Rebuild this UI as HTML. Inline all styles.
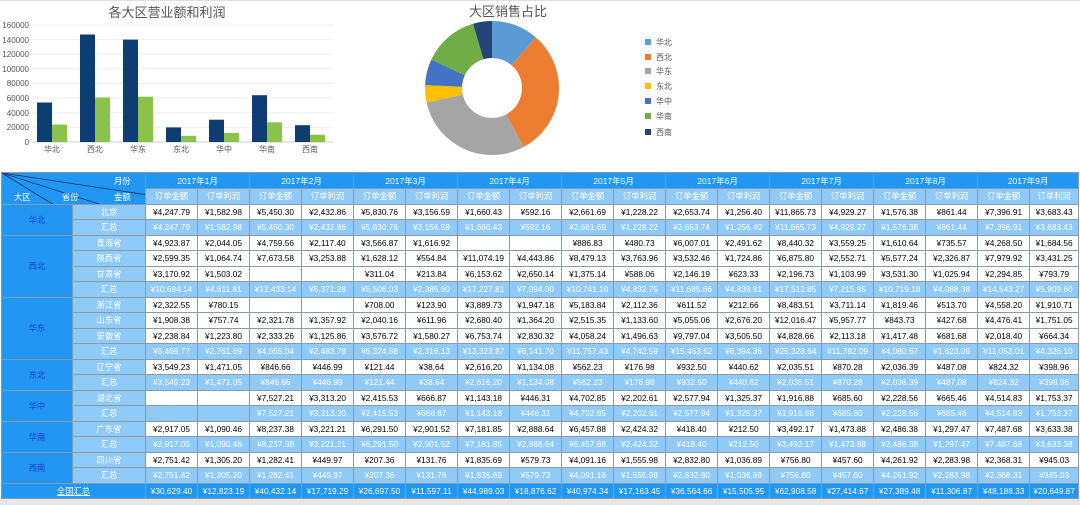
<!DOCTYPE html>
<html><head><meta charset="utf-8">
<style>
*{margin:0;padding:0;box-sizing:border-box}
body{width:1080px;height:505px;background:#fff;position:relative;overflow:hidden;font-family:"Liberation Sans","Noto Sans CJK SC",sans-serif}
svg text{font-family:"Liberation Sans","Noto Sans CJK SC",sans-serif}
#bg{position:absolute;left:0;top:497px;width:1080px;height:8px;background:#e6e6e6}
table{position:absolute;left:1px;top:172px;width:1077px;border-collapse:collapse;table-layout:fixed;font-size:8.3px}
td{border:1px solid #8a9aa8;height:15.5px;text-align:center;white-space:nowrap;overflow:hidden;padding:0;line-height:14px}
tr.h td{height:16px;background:#2196f3;color:#fff;font-size:8.5px}
tr.s td{background:#90caf9;color:#fff}
td.r{background:#2196f3;color:#1a3fd0}
td.p{background:#90caf9;color:#fff}
tr.t td{background:#90caf9;color:#fff}
tr.g td{background:#2196f3;color:#fff}
td.c{background:#2196f3;position:relative;padding:0}
</style></head><body>
<div style="position:absolute;left:0;top:0;width:1080px;height:1px;background:#e0e0e0"></div>
<svg width="360" height="165" style="position:absolute;left:0;top:0">
<text x="167" y="17" font-size="13" fill="#555" text-anchor="middle">各大区营业额和利润</text>
<g stroke="#eee" stroke-width="1">
<line x1="32" y1="25" x2="333" y2="25"/><line x1="32" y1="39.6" x2="333" y2="39.6"/><line x1="32" y1="54.3" x2="333" y2="54.3"/><line x1="32" y1="68.9" x2="333" y2="68.9"/><line x1="32" y1="83.5" x2="333" y2="83.5"/><line x1="32" y1="98.1" x2="333" y2="98.1"/><line x1="32" y1="112.8" x2="333" y2="112.8"/><line x1="32" y1="127.4" x2="333" y2="127.4"/>
</g>
<line x1="32" y1="142" x2="333" y2="142" stroke="#ccc"/>
<g font-size="8" fill="#555" text-anchor="end">
<text x="29" y="28">160000</text><text x="29" y="43">140000</text><text x="29" y="57">120000</text><text x="29" y="72">100000</text><text x="29" y="86">80000</text><text x="29" y="101">60000</text><text x="29" y="116">40000</text><text x="29" y="130">20000</text><text x="29" y="145">0</text>
</g>
<g fill="#0d3d73">
<rect x="37" y="102.5" width="15" height="39.5"/><rect x="80" y="34.5" width="15" height="107.5"/><rect x="123" y="39.6" width="15" height="102.4"/><rect x="166" y="127.4" width="15" height="14.6"/><rect x="209" y="119.7" width="15" height="22.3"/><rect x="252" y="95.2" width="15" height="46.8"/><rect x="295" y="125.2" width="15" height="16.8"/>
</g>
<g fill="#8bc34a">
<rect x="52" y="124.5" width="15" height="17.5"/><rect x="95" y="97.4" width="15" height="44.6"/><rect x="138" y="96.7" width="15" height="45.3"/><rect x="181" y="135.8" width="15" height="6.2"/><rect x="224" y="132.9" width="15" height="9.1"/><rect x="267" y="122.3" width="15" height="19.7"/><rect x="310" y="134.7" width="15" height="7.3"/>
</g>
<g font-size="8" fill="#555" text-anchor="middle">
<text x="52" y="152">华北</text><text x="95" y="152">西北</text><text x="138" y="152">华东</text><text x="181" y="152">东北</text><text x="224" y="152">华中</text><text x="267" y="152">华南</text><text x="310" y="152">西南</text>
</g>
</svg>
<svg width="680" height="165" style="position:absolute;left:400px;top:0">
<text x="108" y="16" font-size="13" fill="#555" text-anchor="middle">大区销售占比</text>
<g fill="none" stroke-width="37" transform="rotate(-90 92 88)">
<circle cx="92" cy="88" r="48.5" stroke="#5b9bd5" stroke-dasharray="34.4 400" stroke-dashoffset="0"/>
<circle cx="92" cy="88" r="48.5" stroke="#ed7d31" stroke-dasharray="93.8 400" stroke-dashoffset="-34.4"/>
<circle cx="92" cy="88" r="48.5" stroke="#a5a5a5" stroke-dasharray="89.3 400" stroke-dashoffset="-128.2"/>
<circle cx="92" cy="88" r="48.5" stroke="#ffc000" stroke-dasharray="12.8 400" stroke-dashoffset="-217.5"/>
<circle cx="92" cy="88" r="48.5" stroke="#4472c4" stroke-dasharray="19.2 400" stroke-dashoffset="-230.3"/>
<circle cx="92" cy="88" r="48.5" stroke="#70ad47" stroke-dasharray="40.8 400" stroke-dashoffset="-249.5"/>
<circle cx="92" cy="88" r="48.5" stroke="#264478" stroke-dasharray="14.6 400" stroke-dashoffset="-290.3"/>
</g>
<g font-size="8" fill="#555">
<rect x="245" y="39" width="6" height="6" fill="#5b9bd5"/><text x="256" y="45">华北</text>
<rect x="245" y="54" width="6" height="6" fill="#ed7d31"/><text x="256" y="60">西北</text>
<rect x="245" y="68" width="6" height="6" fill="#a5a5a5"/><text x="256" y="74">华东</text>
<rect x="245" y="83" width="6" height="6" fill="#ffc000"/><text x="256" y="89">东北</text>
<rect x="245" y="98" width="6" height="6" fill="#4472c4"/><text x="256" y="104">华中</text>
<rect x="245" y="113" width="6" height="6" fill="#70ad47"/><text x="256" y="119">华南</text>
<rect x="245" y="129" width="6" height="6" fill="#264478"/><text x="256" y="135">西南</text>
</g>
</svg>
<div id="bg"></div>
<table>
<colgroup><col style="width:71px"><col style="width:73px"><col span="17" style="width:52px"><col style="width:49px"></colgroup>
<tr class="h"><td class="c" colspan="2" rowspan="2"><svg width="146" height="32" style="position:absolute;left:0;top:0"><g stroke="#12335e" stroke-width="0.8"><line x1="0" y1="0" x2="52" y2="32"/><line x1="0" y1="0" x2="100" y2="32"/><line x1="0" y1="0" x2="146" y2="22"/></g><g font-size="8.3" fill="#fff"><text x="112" y="11">月份</text><text x="12" y="27">大区</text><text x="60" y="27">省份</text><text x="112" y="27">金额</text></g></svg></td><td colspan="2">2017年1月</td><td colspan="2">2017年2月</td><td colspan="2">2017年3月</td><td colspan="2">2017年4月</td><td colspan="2">2017年5月</td><td colspan="2">2017年6月</td><td colspan="2">2017年7月</td><td colspan="2">2017年8月</td><td colspan="2">2017年9月</td></tr>
<tr class="s"><td>订单金额</td><td>订单利润</td><td>订单金额</td><td>订单利润</td><td>订单金额</td><td>订单利润</td><td>订单金额</td><td>订单利润</td><td>订单金额</td><td>订单利润</td><td>订单金额</td><td>订单利润</td><td>订单金额</td><td>订单利润</td><td>订单金额</td><td>订单利润</td><td>订单金额</td><td>订单利润</td></tr>
<tr><td class="r" rowspan="2">华北</td><td class="p">北京</td><td>¥4,247.79</td><td>¥1,582.98</td><td>¥5,450.30</td><td>¥2,432.86</td><td>¥5,830.76</td><td>¥3,156.59</td><td>¥1,660.43</td><td>¥592.16</td><td>¥2,661.69</td><td>¥1,228.22</td><td>¥2,653.74</td><td>¥1,256.40</td><td>¥11,865.73</td><td>¥4,929.27</td><td>¥1,576.38</td><td>¥861.44</td><td>¥7,396.91</td><td>¥3,683.43</td></tr>
<tr class="t"><td>汇总</td><td>¥4,247.79</td><td>¥1,582.98</td><td>¥5,450.30</td><td>¥2,432.86</td><td>¥5,830.76</td><td>¥3,156.59</td><td>¥1,660.43</td><td>¥592.16</td><td>¥2,661.69</td><td>¥1,228.22</td><td>¥2,653.74</td><td>¥1,256.40</td><td>¥11,865.73</td><td>¥4,929.27</td><td>¥1,576.38</td><td>¥861.44</td><td>¥7,396.91</td><td>¥3,683.43</td></tr>
<tr><td class="r" rowspan="4">西北</td><td class="p">青海省</td><td>¥4,923.87</td><td>¥2,044.05</td><td>¥4,759.56</td><td>¥2,117.40</td><td>¥3,566.87</td><td>¥1,616.92</td><td></td><td></td><td>¥886.83</td><td>¥480.73</td><td>¥6,007.01</td><td>¥2,491.62</td><td>¥8,440.32</td><td>¥3,559.25</td><td>¥1,610.64</td><td>¥735.57</td><td>¥4,268.50</td><td>¥1,684.56</td></tr>
<tr><td class="p">陕西省</td><td>¥2,599.35</td><td>¥1,064.74</td><td>¥7,673.58</td><td>¥3,253.88</td><td>¥1,628.12</td><td>¥554.84</td><td>¥11,074.19</td><td>¥4,443.86</td><td>¥8,479.13</td><td>¥3,763.96</td><td>¥3,532.46</td><td>¥1,724.86</td><td>¥6,875.80</td><td>¥2,552.71</td><td>¥5,577.24</td><td>¥2,326.87</td><td>¥7,979.92</td><td>¥3,431.25</td></tr>
<tr><td class="p">甘肃省</td><td>¥3,170.92</td><td>¥1,503.02</td><td></td><td></td><td>¥311.04</td><td>¥213.84</td><td>¥6,153.62</td><td>¥2,650.14</td><td>¥1,375.14</td><td>¥588.06</td><td>¥2,146.19</td><td>¥623.33</td><td>¥2,196.73</td><td>¥1,103.99</td><td>¥3,531.30</td><td>¥1,025.94</td><td>¥2,294.85</td><td>¥793.79</td></tr>
<tr class="t"><td>汇总</td><td>¥10,694.14</td><td>¥4,611.81</td><td>¥12,433.14</td><td>¥5,371.28</td><td>¥5,506.03</td><td>¥2,385.60</td><td>¥17,227.81</td><td>¥7,094.00</td><td>¥10,741.10</td><td>¥4,832.75</td><td>¥11,685.66</td><td>¥4,839.81</td><td>¥17,512.85</td><td>¥7,215.95</td><td>¥10,719.18</td><td>¥4,088.38</td><td>¥14,543.27</td><td>¥5,909.60</td></tr>
<tr><td class="r" rowspan="4">华东</td><td class="p">浙江省</td><td>¥2,322.55</td><td>¥780.15</td><td></td><td></td><td>¥708.00</td><td>¥123.90</td><td>¥3,889.73</td><td>¥1,947.18</td><td>¥5,183.84</td><td>¥2,112.36</td><td>¥611.52</td><td>¥212.66</td><td>¥8,483.51</td><td>¥3,711.14</td><td>¥1,819.46</td><td>¥513.70</td><td>¥4,558.20</td><td>¥1,910.71</td></tr>
<tr><td class="p">山东省</td><td>¥1,908.38</td><td>¥757.74</td><td>¥2,321.78</td><td>¥1,357.92</td><td>¥2,040.16</td><td>¥611.96</td><td>¥2,680.40</td><td>¥1,364.20</td><td>¥2,515.35</td><td>¥1,133.60</td><td>¥5,055.06</td><td>¥2,676.20</td><td>¥12,016.47</td><td>¥5,957.77</td><td>¥843.73</td><td>¥427.68</td><td>¥4,476.41</td><td>¥1,751.05</td></tr>
<tr><td class="p">安徽省</td><td>¥2,238.84</td><td>¥1,223.80</td><td>¥2,333.26</td><td>¥1,125.86</td><td>¥3,576.72</td><td>¥1,580.27</td><td>¥6,753.74</td><td>¥2,830.32</td><td>¥4,058.24</td><td>¥1,496.63</td><td>¥9,797.04</td><td>¥3,505.50</td><td>¥4,828.66</td><td>¥2,113.18</td><td>¥1,417.48</td><td>¥681.68</td><td>¥2,018.40</td><td>¥664.34</td></tr>
<tr class="t"><td>汇总</td><td>¥6,469.77</td><td>¥2,761.69</td><td>¥4,655.04</td><td>¥2,483.78</td><td>¥6,324.88</td><td>¥2,316.13</td><td>¥13,323.87</td><td>¥6,141.70</td><td>¥11,757.43</td><td>¥4,742.59</td><td>¥15,463.62</td><td>¥6,394.36</td><td>¥25,328.64</td><td>¥11,782.09</td><td>¥4,080.67</td><td>¥1,623.06</td><td>¥11,053.01</td><td>¥4,326.10</td></tr>
<tr><td class="r" rowspan="2">东北</td><td class="p">辽宁省</td><td>¥3,549.23</td><td>¥1,471.05</td><td>¥846.66</td><td>¥446.99</td><td>¥121.44</td><td>¥38.64</td><td>¥2,616.20</td><td>¥1,134.08</td><td>¥562.23</td><td>¥176.98</td><td>¥932.50</td><td>¥440.62</td><td>¥2,035.51</td><td>¥870.28</td><td>¥2,036.39</td><td>¥487.08</td><td>¥824.32</td><td>¥398.96</td></tr>
<tr class="t"><td>汇总</td><td>¥3,549.23</td><td>¥1,471.05</td><td>¥846.66</td><td>¥446.99</td><td>¥121.44</td><td>¥38.64</td><td>¥2,616.20</td><td>¥1,134.08</td><td>¥562.23</td><td>¥176.98</td><td>¥932.50</td><td>¥440.62</td><td>¥2,035.51</td><td>¥870.28</td><td>¥2,036.39</td><td>¥487.08</td><td>¥824.32</td><td>¥398.96</td></tr>
<tr><td class="r" rowspan="2">华中</td><td class="p">湖北省</td><td></td><td></td><td>¥7,527.21</td><td>¥3,313.20</td><td>¥2,415.53</td><td>¥666.87</td><td>¥1,143.18</td><td>¥446.31</td><td>¥4,702.85</td><td>¥2,202.61</td><td>¥2,577.94</td><td>¥1,325.37</td><td>¥1,916.88</td><td>¥685.60</td><td>¥2,228.56</td><td>¥665.46</td><td>¥4,514.83</td><td>¥1,753.37</td></tr>
<tr class="t"><td>汇总</td><td></td><td></td><td>¥7,527.21</td><td>¥3,313.20</td><td>¥2,415.53</td><td>¥666.87</td><td>¥1,143.18</td><td>¥446.31</td><td>¥4,702.85</td><td>¥2,202.61</td><td>¥2,577.94</td><td>¥1,325.37</td><td>¥1,916.88</td><td>¥685.60</td><td>¥2,228.56</td><td>¥665.46</td><td>¥4,514.83</td><td>¥1,753.37</td></tr>
<tr><td class="r" rowspan="2">华南</td><td class="p">广东省</td><td>¥2,917.05</td><td>¥1,090.46</td><td>¥8,237.38</td><td>¥3,221.21</td><td>¥6,291.50</td><td>¥2,901.52</td><td>¥7,181.85</td><td>¥2,888.64</td><td>¥6,457.88</td><td>¥2,424.32</td><td>¥418.40</td><td>¥212.50</td><td>¥3,492.17</td><td>¥1,473.88</td><td>¥2,486.38</td><td>¥1,297.47</td><td>¥7,487.68</td><td>¥3,633.38</td></tr>
<tr class="t"><td>汇总</td><td>¥2,917.05</td><td>¥1,090.46</td><td>¥8,237.38</td><td>¥3,221.21</td><td>¥6,291.50</td><td>¥2,901.52</td><td>¥7,181.85</td><td>¥2,888.64</td><td>¥6,457.88</td><td>¥2,424.32</td><td>¥418.40</td><td>¥212.50</td><td>¥3,492.17</td><td>¥1,473.88</td><td>¥2,486.38</td><td>¥1,297.47</td><td>¥7,487.68</td><td>¥3,633.38</td></tr>
<tr><td class="r" rowspan="2">西南</td><td class="p">四川省</td><td>¥2,751.42</td><td>¥1,305.20</td><td>¥1,282.41</td><td>¥449.97</td><td>¥207.36</td><td>¥131.76</td><td>¥1,835.69</td><td>¥579.73</td><td>¥4,091.16</td><td>¥1,555.98</td><td>¥2,832.80</td><td>¥1,036.89</td><td>¥756.80</td><td>¥457.60</td><td>¥4,261.92</td><td>¥2,283.98</td><td>¥2,368.31</td><td>¥945.03</td></tr>
<tr class="t"><td>汇总</td><td>¥2,751.42</td><td>¥1,305.20</td><td>¥1,282.41</td><td>¥449.97</td><td>¥207.36</td><td>¥131.76</td><td>¥1,835.69</td><td>¥579.73</td><td>¥4,091.16</td><td>¥1,555.98</td><td>¥2,832.80</td><td>¥1,036.89</td><td>¥756.80</td><td>¥457.60</td><td>¥4,261.92</td><td>¥2,283.98</td><td>¥2,368.31</td><td>¥945.03</td></tr>
<tr class="g"><td colspan="2"><u>全国汇总</u></td><td>¥30,629.40</td><td>¥12,823.19</td><td>¥40,432.14</td><td>¥17,719.29</td><td>¥26,697.50</td><td>¥11,597.11</td><td>¥44,989.03</td><td>¥18,876.62</td><td>¥40,974.34</td><td>¥17,163.45</td><td>¥36,564.66</td><td>¥15,505.95</td><td>¥62,908.58</td><td>¥27,414.67</td><td>¥27,389.48</td><td>¥11,306.87</td><td>¥48,188.33</td><td>¥20,649.87</td></tr>
</table>
</body></html>
